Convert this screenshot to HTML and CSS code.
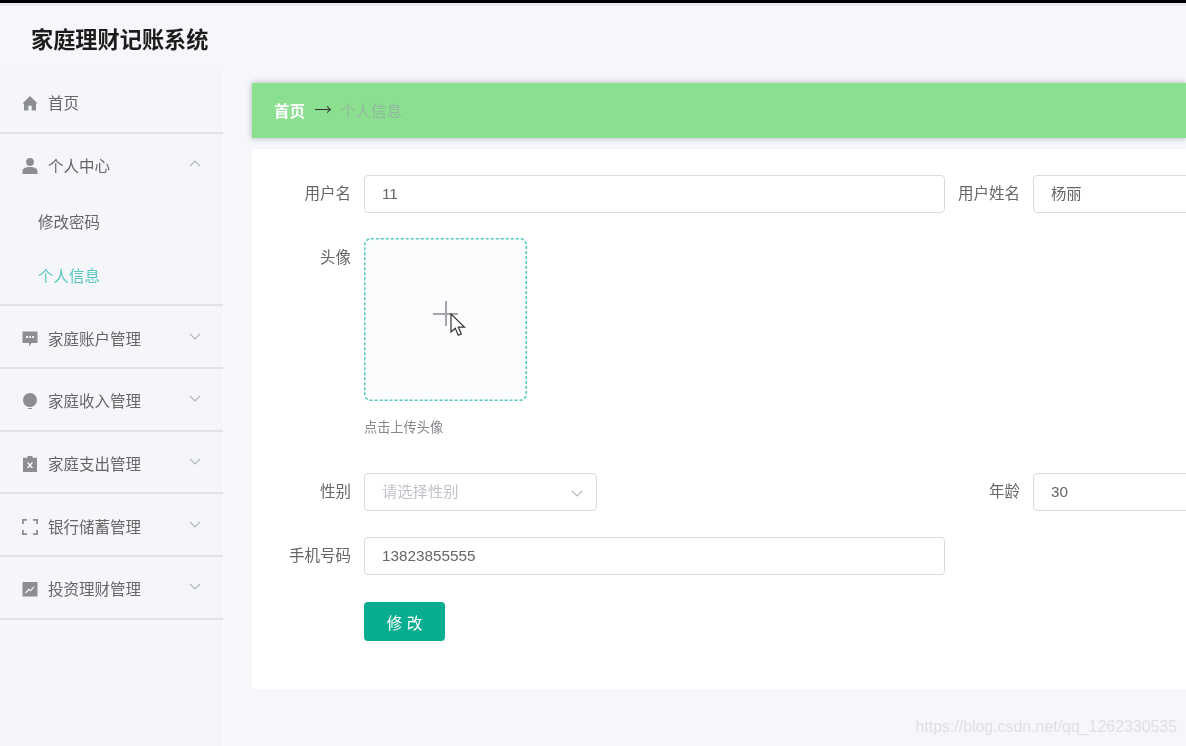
FILE: index.html
```html
<!DOCTYPE html>
<html lang="zh-CN">
<head>
  <meta charset="UTF-8" />
  <meta name="viewport" content="width=device-width, initial-scale=1" />
  <title>家庭理财记账系统</title>
  <link rel="stylesheet" href="styles.css">
</head>
<body>
  <div class="screen">
    <div class="topline"></div>
    <div class="header">家庭理财记账系统</div>

    <div class="layout">
      <div class="sidebar">
        <div class="menu-item">
          <svg class="icon" viewBox="0 0 16 16"><path d="M8 1 0.400 8.400 2 8.400V15.500h4.300v-4.700h3.400v4.700H14V8.400h1.600z"/></svg>
          <span>首页</span>
        </div>

        <div class="menu-group">
          <div class="menu-item">
            <svg class="icon" viewBox="0 0 16 16"><circle cx="8" cy="4" r="3.900"/><path d="M0.500 16v-3C0.500 10.200 4 9 8 9s7.500 1.200 7.500 4v3z"/></svg>
            <span>个人中心</span>
            <svg class="arrow" viewBox="0 0 12 7"><path d="M1 6 6 1l5 5"/></svg>
          </div>
          <div class="sub-item">修改密码</div>
          <div class="sub-item active">个人信息</div>
        </div>

        <div class="menu-item">
          <svg class="icon" viewBox="0 0 16 16"><path fill-rule="evenodd" d="M0.500 0.500h15v11.500H9.500L7 15.500V12H0.500zM4 5v2h1.900V5zM7.100 5v2h1.900V5zM10.200 5v2H12V5z"/></svg>
          <span>家庭账户管理</span>
          <svg class="arrow" viewBox="0 0 12 7"><path d="M1 1l5 5 5-5"/></svg>
        </div>
        <div class="menu-item">
          <svg class="icon" viewBox="0 0 16 16"><path d="M8 0a7 7 0 0 1 7 7c0 2.700-1.600 5-3.700 6.300l-2 0.700H6.700l-2-0.700A7.100 7.100 0 0 1 1 7a7 7 0 0 1 7-7z"/><path d="M6 15h4v1H6z"/></svg>
          <span>家庭收入管理</span>
          <svg class="arrow" viewBox="0 0 12 7"><path d="M1 1l5 5 5-5"/></svg>
        </div>
        <div class="menu-item">
          <svg class="icon" viewBox="0 0 16 16"><path fill-rule="evenodd" d="M5.500 0h5v1.800H15V16H1V1.800h4.500zM4.800 6.500 7 9.300 4.800 12h1.900L8 10.400 9.300 12h1.900L9 9.300l2.200-2.800H9.300L8 8.200 6.700 6.500z"/></svg>
          <span>家庭支出管理</span>
          <svg class="arrow" viewBox="0 0 12 7"><path d="M1 1l5 5 5-5"/></svg>
        </div>
        <div class="menu-item">
          <svg class="icon" viewBox="0 0 16 16"><path d="M0 0h5v1.800H1.800V5H0zM11 0h5v5h-1.800V1.800H11zM0 11h1.800v3.200H5V16H0zM14.200 11H16v5h-5v-1.800h3.200z"/></svg>
          <span>银行储蓄管理</span>
          <svg class="arrow" viewBox="0 0 12 7"><path d="M1 1l5 5 5-5"/></svg>
        </div>
        <div class="menu-item">
          <svg class="icon" viewBox="0 0 16 16"><path fill-rule="evenodd" d="M0.500 1h15v14.500H0.500zM3 11.500l0.900 0.900 3.100-3.100 1.700 1.300 3.900-4.500-0.900-0.800-3.100 3.600-1.700-1.300z"/></svg>
          <span>投资理财管理</span>
          <svg class="arrow" viewBox="0 0 12 7"><path d="M1 1l5 5 5-5"/></svg>
        </div>
      </div>

      <div class="main">
        <div class="crumb">
          <span class="crumb-home">首页</span>
          <span class="crumb-sep"></span>
          <span class="crumb-now">个人信息</span>
        </div>

        <div class="card">
          <form class="form">
            <label>用户名</label>
            <div class="input">11</div>
            <label>用户姓名</label>
            <div class="input">杨丽</div>

            <label class="top">头像</label>
            <div class="wide">
              <div class="upload">
                <svg class="dash" viewBox="0 0 163 163"><rect x="0.750" y="0.750" width="161.500" height="161.500" rx="6"/></svg>
                <span class="plus"></span>
                <svg class="cursor" viewBox="0 0 16 24"><path d="M1 1v18l4.300-3.800 3 7 3-1.300-3-6.800H14.500z"/></svg>
              </div>
              <div class="hint">点击上传头像</div>
            </div>

            <label>性别</label>
            <div class="input select">
              <span>请选择性别</span>
              <svg class="arrow" viewBox="0 0 12 7"><path d="M1 1l5 5 5-5"/></svg>
            </div>
            <label>年龄</label>
            <div class="input">30</div>

            <label>手机号码</label>
            <div class="input">13823855555</div>
            <span></span>
            <span></span>

            <span></span>
            <button type="button" class="save">修 改</button>
          </form>
        </div>
      </div>
    </div>

    <div class="watermark">https://blog.csdn.net/qq_1262330535</div>
  </div>
</body>
</html>
```

FILE: styles.css
```css
html, body {
  margin: 0;
  padding: 0;
  height: 746px;
  overflow: hidden;
}
body {
  font-family: "Liberation Sans", "Noto Sans CJK SC", sans-serif;
  font-size: 15.500px;
  color: #666;
  background: #f6f7fa;
}
.screen {
  position: relative;
  height: 746px;
  overflow: hidden;
  filter: blur(0.4px);
}
.topline {
  height: 3px;
  background: #000;
  border-bottom: 3px solid #e9eaed;
}
.header {
  height: 65px;
  padding-left: 31px;
  line-height: 69px;
  font-size: 22.200px;
  font-weight: bold;
  color: #1c1c1c;
}
.layout {
  display: flex;
  height: 675px;
}
.sidebar {
  flex: 0 0 223px;
  background: #f4f6fa;
  border-right: 2px solid #f9fafb;
}
.menu-item {
  box-sizing: border-box;
  display: flex;
  align-items: center;
  height: 62.700px;
  padding: 2px 22px 0;
  border-bottom: 2px solid #e1e2e6;
}
.menu-group .menu-item {
  padding-top: 0;
  border-bottom: none;
}
.menu-group {
  border-bottom: 2px solid #e1e2e6;
}
.icon {
  flex: none;
  width: 16px;
  height: 16px;
  margin: 2px 10px 0 0;
  fill: #8d8e91;
}
.arrow {
  width: 12px;
  height: 7px;
  margin-left: auto;
  margin-top: -3px;
  fill: none;
  stroke: #b4b6ba;
  stroke-width: 1.200;
}
.sub-item {
  height: 54px;
  line-height: 54px;
  padding-left: 38px;
}
.sub-item.active {
  color: #5bc8c0;
}
.main {
  flex: 1;
  min-width: 0;
  padding: 12px 0 0 27px;
}
.crumb {
  box-sizing: border-box;
  display: flex;
  align-items: center;
  gap: 10px;
  height: 55px;
  padding: 0 0 2px 22px;
  background: #8ae08e;
  box-shadow: 0 0 6px rgba(0, 0, 0, 0.3);
}
.crumb-home {
  font-weight: bold;
  color: #fff;
}
.crumb-sep {
  position: relative;
  width: 15px;
  height: 1.500px;
  background: #333;
}
.crumb-sep::after {
  content: "";
  position: absolute;
  right: 0;
  top: -2px;
  width: 4px;
  height: 4px;
  border-top: 1px solid #333;
  border-right: 1px solid #333;
  transform: rotate(45deg);
}
.crumb-now {
  color: #93b8a0;
}
.card {
  margin-top: 11px;
  height: 540px;
  overflow: hidden;
  background: #fff;
}
.form {
  display: grid;
  grid-template-columns: 99px 581px 62px 160px;
  grid-template-rows: 38px auto 38px 38px 39px;
  column-gap: 13px;
  row-gap: 26px;
  padding-top: 26px;
}
.form label {
  line-height: 38px;
  text-align: right;
  white-space: nowrap;
}
.form label.top {
  margin-top: -1px;
  line-height: 40px;
}
.input {
  box-sizing: border-box;
  height: 38px;
  line-height: 36px;
  padding-left: 17px;
  font-size: 15.300px;
  background: #fff;
  border: 1px solid #d9dae2;
  border-radius: 4px;
}
.wide {
  grid-column: 2 / 5;
}
.upload {
  position: relative;
  width: 163px;
  height: 163px;
  margin-top: -1px;
  background: #fbfcfe;
  border-radius: 6px;
}
.dash {
  position: absolute;
  left: 0;
  top: 0;
  width: 163px;
  height: 163px;
  fill: none;
  stroke: #55c9bc;
  stroke-width: 1.500;
  stroke-dasharray: 3 2;
}
.plus {
  position: absolute;
  left: 69px;
  top: 63px;
  width: 25px;
  height: 25px;
  background:
    linear-gradient(#a4a5a9, #a4a5a9) center / 25px 2px no-repeat,
    linear-gradient(#a4a5a9, #a4a5a9) center / 2px 25px no-repeat;
}
.cursor {
  position: absolute;
  left: 86px;
  top: 75px;
  width: 16px;
  height: 24px;
  fill: #fff;
  stroke: #333;
  stroke-width: 1.200;
}
.hint {
  margin: 16px 0 11px;
  font-size: 13.200px;
  color: #85878c;
}
.select {
  display: flex;
  align-items: center;
  width: 233px;
  padding-right: 13px;
  color: #c0c3cb;
}
.select .arrow {
  margin-top: 3px;
}
.save {
  width: 81px;
  height: 39px;
  margin-top: 1px;
  padding: 0;
  font: inherit;
  color: #fff;
  background: #09ad90;
  border: none;
  border-radius: 4px;
}
.watermark {
  position: absolute;
  right: 9px;
  bottom: 10px;
  font-size: 15.900px;
  color: #dfe0e3;
}
```
